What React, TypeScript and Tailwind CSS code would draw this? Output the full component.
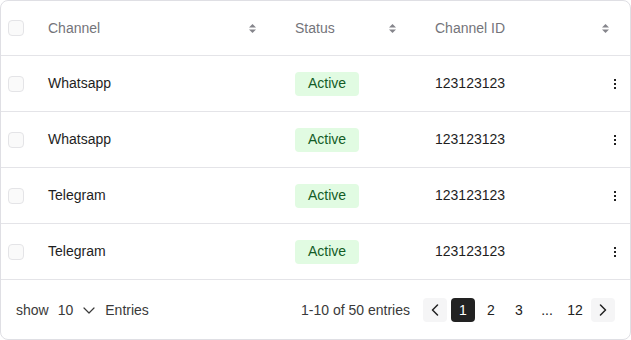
const rows = [
  { name: "Whatsapp", status: "Active", id: "123123123" },
  { name: "Whatsapp", status: "Active", id: "123123123" },
  { name: "Telegram", status: "Active", id: "123123123" },
  { name: "Telegram", status: "Active", id: "123123123" },
];

function SortIcon() {
  return (
    <svg width="7" height="9" viewBox="0 0 7 9" className="shrink-0 text-[#85858b]">
      <path d="M0 3.6 L3.5 0 L7 3.6 Z" fill="currentColor" />
      <path d="M0 5.4 L3.5 9 L7 5.4 Z" fill="currentColor" />
    </svg>
  );
}

function Checkbox() {
  return <div className="w-4 h-4 rounded-[4px] border border-[#e4e4e7] bg-[#fafafa]" />;
}

function Kebab() {
  return (
    <svg width="4" height="10" viewBox="0 0 4 10" className="text-[#222]">
      <rect x="1" y="0" width="2" height="2" fill="currentColor" />
      <rect x="1" y="4" width="2" height="2" fill="currentColor" />
      <rect x="1" y="8" width="2" height="2" fill="currentColor" />
    </svg>
  );
}

function Chevron({ dir }: { dir: "left" | "right" }) {
  return (
    <svg width="8" height="12" viewBox="0 0 8 12" fill="none">
      <path
        d={dir === "left" ? "M6.5 1 L1.5 6 L6.5 11" : "M1.5 1 L6.5 6 L1.5 11"}
        stroke="#222"
        strokeWidth="1.5"
        strokeLinecap="round"
        strokeLinejoin="round"
      />
    </svg>
  );
}

export default function App() {
  return (
    <div className="w-[631px] h-[340px] bg-white font-['Liberation_Sans',Arial,sans-serif] text-[14px]">
      <div className="h-full border border-[#dfdfe4] rounded-lg overflow-hidden flex flex-col">
        {/* Header */}
        <div className="h-[55px] shrink-0 flex items-center border-b border-[#e4e4e8] text-[#74747a]">
          <div className="w-[47px] pl-[7px]">
            <Checkbox />
          </div>
          <div className="w-[208px] flex items-center justify-between">
            <span>Channel</span>
            <SortIcon />
          </div>
          <div className="w-[101px] ml-[39px] flex items-center justify-between">
            <span>Status</span>
            <SortIcon />
          </div>
          <div className="flex-1 ml-[39px] pr-[21px] flex items-center justify-between">
            <span>Channel ID</span>
            <SortIcon />
          </div>
        </div>

        {/* Rows */}
        {rows.map((r, i) => (
          <div key={i} className="h-[56px] shrink-0 flex items-center border-b border-[#e4e4e8] text-[#1e1e1e]">
            <div className="w-[47px] pl-[7px]">
              <Checkbox />
            </div>
            <div className="w-[208px] font-medium">{r.name}</div>
            <div className="w-[101px] ml-[39px]">
              <span className="inline-flex items-center h-6 px-[13px] rounded-[4px] bg-[#e1fbe2] text-[#135c26]">
                {r.status}
              </span>
            </div>
            <div className="flex-1 ml-[39px] pr-[13px] flex items-center justify-between">
              <span>{r.id}</span>
              <Kebab />
            </div>
          </div>
        ))}

        {/* Footer */}
        <div className="flex-1 flex items-center justify-between pl-[15px] pr-[15px] pt-[1px] text-[#3a3a3a]">
          <div className="flex items-center">
            <span>show</span>
            <span className="ml-[9px]">10</span>
            <svg width="12" height="7" viewBox="0 0 12 7" fill="none" className="ml-[10px]">
              <path d="M1 1 L6 6 L11 1" stroke="#3a3a3a" strokeWidth="1.2" strokeLinecap="round" strokeLinejoin="round" />
            </svg>
            <span className="ml-[10px]">Entries</span>
          </div>
          <div className="flex items-center">
            <span className="mr-[13px]">1-10 of 50 entries</span>
            <div className="flex items-center gap-1 text-[#222]">
              <button className="w-6 h-6 rounded-[4px] bg-[#f5f5f6] flex items-center justify-center">
                <Chevron dir="left" />
              </button>
              <button className="w-6 h-6 rounded-[4px] bg-[#222] text-white flex items-center justify-center">1</button>
              <button className="w-6 h-6 rounded-[4px] flex items-center justify-center">2</button>
              <button className="w-6 h-6 rounded-[4px] flex items-center justify-center">3</button>
              <span className="w-6 h-6 flex items-center justify-center">...</span>
              <button className="w-6 h-6 rounded-[4px] flex items-center justify-center">12</button>
              <button className="w-6 h-6 rounded-[4px] bg-[#f5f5f6] flex items-center justify-center">
                <Chevron dir="right" />
              </button>
            </div>
          </div>
        </div>
      </div>
    </div>
  );
}
